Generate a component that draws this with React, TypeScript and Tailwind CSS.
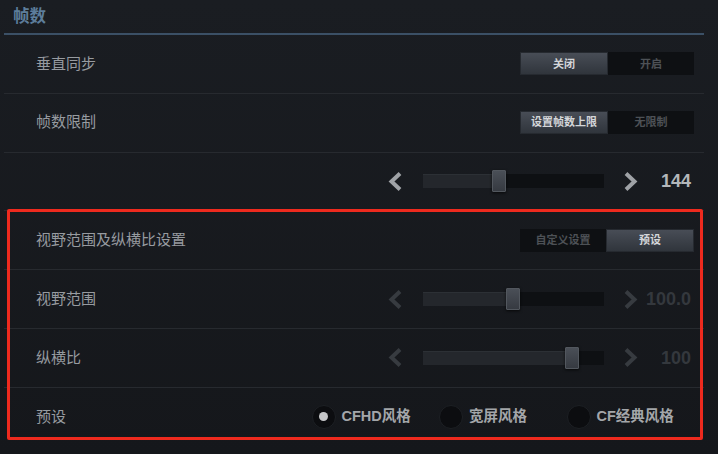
import React from 'react';

const font = { fontFamily: '"Liberation Sans", "Noto Sans CJK SC", sans-serif' };

function Chevron({ dir, dim }: { dir: 'left' | 'right'; dim?: boolean }) {
  const pts = dir === 'left' ? '12,1.5 3.5,9.5 12,17.5' : '2,1.5 10.5,9.5 2,17.5';
  return (
    <svg width="14" height="19" viewBox="0 0 14 19" className="shrink-0">
      <polyline
        points={pts}
        fill="none"
        stroke={dim ? '#373b40' : '#9fa2a6'}
        strokeWidth="4"
        strokeLinejoin="miter"
      />
    </svg>
  );
}

function Segmented({ options, active }: { options: string[]; active: number }) {
  return (
    <div className="flex h-[23px] w-[174px] bg-[#0e1013]">
      {options.map((o, i) => (
        <div
          key={o}
          className={
            i === active
              ? 'flex-1 flex items-center justify-center text-[11px] font-bold text-[#d4d6d9] bg-gradient-to-b from-[#484d56] to-[#30353c] border border-[#262a30]'
              : 'flex-1 flex items-center justify-center text-[11px] font-bold text-[#4d5156]'
          }
        >
          {o}
        </div>
      ))}
    </div>
  );
}

function Slider({ pos, value, dim }: { pos: number; value: string; dim?: boolean }) {
  return (
    <div className="flex items-center mr-[3px]">
      <Chevron dir="left" dim={dim} />
      <div className="relative ml-[21px] h-[14px] w-[181px] bg-[#0e1013]">
        <div className="h-full bg-[#24272c] border-t border-[#2c3035]" style={{ width: pos + 7 }} />
        <div
          className="absolute top-[-4px] h-[22px] w-[14px] rounded-[1px] bg-gradient-to-b from-[#4a4f57] to-[#363a41] border border-[#52575e] shadow-[0_1px_3px_rgba(0,0,0,0.7)]"
          style={{ left: pos }}
        />
      </div>
      <div className="ml-[20px]">
        <Chevron dir="right" dim={dim} />
      </div>
      <div
        className={`w-[53px] text-right text-[18px] font-bold leading-none ${dim ? 'text-[#34383d]' : 'text-[#b4b7ba]'}`}
      >
        {value}
      </div>
    </div>
  );
}

function Radio({ label, checked }: { label: string; checked?: boolean }) {
  return (
    <div className="flex w-[127.5px] items-center gap-[6px]">
      <div className="flex h-[24px] w-[24px] items-center justify-center rounded-full bg-[#0c0d10] border border-[#1d2024]">
        {checked && <div className="h-[9px] w-[9px] rounded-full bg-[#c6c7c9]" />}
      </div>
      <span className="text-[14.5px] font-bold text-[#a3a6a9]">{label}</span>
    </div>
  );
}

function Row({ label, children }: { label: string; children?: React.ReactNode }) {
  return (
    <div className="flex h-[58.8px] items-center justify-between border-b border-[#272a2f] pl-[32px] pr-[10px]">
      <span className="text-[15px] text-[#979ba0]">{label}</span>
      {children}
    </div>
  );
}

export default function App() {
  return (
    <div
      className="relative h-[454px] w-[718px] overflow-hidden bg-gradient-to-b from-[#1a1d22] to-[#15171b]"
      style={font}
    >
      <div className="flex h-[33px] items-center pl-[13px] text-[16.5px] font-bold text-[#5d7d9b]">
        帧数
      </div>
      <div className="ml-[4px] mr-[14px] h-[2px] bg-[#3b5066]" />

      <div className="ml-[4px] mr-[14px]">
        <Row label="垂直同步">
          <Segmented options={['关闭', '开启']} active={0} />
        </Row>
        <Row label="帧数限制">
          <Segmented options={['设置帧数上限', '无限制']} active={0} />
        </Row>
        <Row label="">
          <Slider pos={69} value="144" />
        </Row>
        <Row label="视野范围及纵横比设置">
          <Segmented options={['自定义设置', '预设']} active={1} />
        </Row>
        <Row label="视野范围">
          <Slider pos={83} value="100.0" dim />
        </Row>
        <Row label="纵横比">
          <Slider pos={142} value="100" dim />
        </Row>
        <div className="flex h-[58px] items-center justify-between pl-[32px] pr-[10px]">
          <span className="text-[15px] text-[#979ba0]">预设</span>
          <div className="flex">
            <Radio label="CFHD风格" checked />
            <Radio label="宽屏风格" />
            <Radio label="CF经典风格" />
          </div>
        </div>
      </div>

      <div className="pointer-events-none absolute left-[7px] top-[209px] h-[231px] w-[696px] rounded-[2px] border-[3px] border-[#ee2a1e]" />
    </div>
  );
}
